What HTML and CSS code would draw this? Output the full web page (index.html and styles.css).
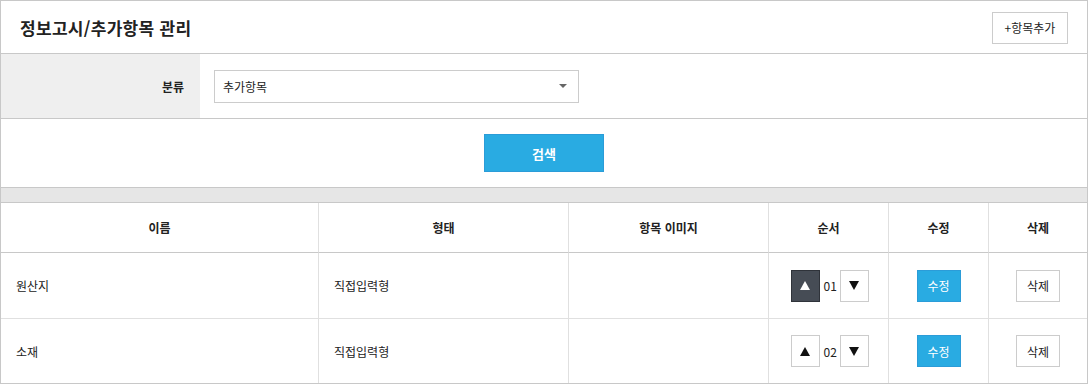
FILE: index.html
```html
<!DOCTYPE html>
<html lang="ko">
<head>
    <meta charset="UTF-8">
    <title>정보고시/추가항목 관리</title>
    <link rel="stylesheet" href="styles.css">
</head>
<body>
    <div class="panel">
        <div class="panel-head">
            <h1>정보고시/추가항목 관리</h1>
            <button class="btn btn-line btn-add">+항목추가</button>
        </div>

        <div class="filter-row">
            <div class="filter-label">분류</div>
            <div class="filter-field">
                <div class="select">
                    <span>추가항목</span>
                    <span class="select-arrow"></span>
                </div>
            </div>
        </div>

        <div class="search-row">
            <button class="btn btn-blue btn-search">검색</button>
        </div>

        <div class="spacer-bar"></div>

        <div class="grid">
            <div class="cell head">이름</div>
            <div class="cell head">형태</div>
            <div class="cell head">항목 이미지</div>
            <div class="cell head">순서</div>
            <div class="cell head">수정</div>
            <div class="cell head last">삭제</div>

            <div class="cell">원산지</div>
            <div class="cell">직접입력형</div>
            <div class="cell"></div>
            <div class="cell center">
                <div class="order">
                    <button class="btn arrow active"><span class="tri up"></span></button>
                    <span class="order-num">01</span>
                    <button class="btn arrow"><span class="tri down"></span></button>
                </div>
            </div>
            <div class="cell center"><button class="btn btn-blue btn-small">수정</button></div>
            <div class="cell center last"><button class="btn btn-line btn-small">삭제</button></div>

            <div class="cell bottom">소재</div>
            <div class="cell bottom">직접입력형</div>
            <div class="cell bottom"></div>
            <div class="cell center bottom">
                <div class="order">
                    <button class="btn arrow"><span class="tri up"></span></button>
                    <span class="order-num">02</span>
                    <button class="btn arrow"><span class="tri down"></span></button>
                </div>
            </div>
            <div class="cell center bottom"><button class="btn btn-blue btn-small">수정</button></div>
            <div class="cell center bottom last"><button class="btn btn-line btn-small">삭제</button></div>
        </div>
    </div>
</body>
</html>
```

FILE: styles.css
```css
* {
    margin: 0;
    padding: 0;
    box-sizing: border-box;
}

body {
    font-family: "Noto Sans CJK KR", "Noto Sans", sans-serif;
    font-size: 12px;
    color: #222;
    background: #fff;
}

.panel {
    width: 1088px;
    height: 384px;
    border: 1px solid #c8c8c8;
}

.panel-head {
    height: 53px;
    border-bottom: 1px solid #c8c8c8;
    display: flex;
    align-items: center;
    justify-content: space-between;
    padding: 0 19px 0 19px;
}

h1 {
    font-size: 17px;
    font-weight: 700;
    color: #222;
    letter-spacing: 0.3px;
}

.btn {
    font-family: inherit;
    font-size: 12px;
    cursor: pointer;
    display: flex;
    align-items: center;
    justify-content: center;
    background: #fff;
    color: #222;
}

.btn-line {
    border: 1px solid #ccc;
}

.btn-blue {
    background: #29abe2;
    border: 1px solid #2b9cd8;
    color: #fff;
}

.btn-add {
    width: 76px;
    height: 32px;
    margin-top: 1px;
}

.filter-row {
    display: flex;
    height: 65px;
    border-bottom: 1px solid #c8c8c8;
}

.filter-label {
    width: 199px;
    background: #efefef;
    display: flex;
    align-items: center;
    justify-content: flex-end;
    padding-right: 16px;
    font-weight: 700;
}

.filter-field {
    display: flex;
    align-items: center;
    padding-left: 14px;
}

.select {
    width: 365px;
    height: 33px;
    border: 1px solid #ccc;
    display: flex;
    align-items: center;
    justify-content: space-between;
    padding: 0 11px 0 8px;
}

.select-arrow {
    width: 0;
    height: 0;
    border-left: 4px solid transparent;
    border-right: 4px solid transparent;
    border-top: 4px solid #666;
}

.search-row {
    height: 68px;
    display: flex;
    align-items: center;
    justify-content: center;
}

.btn-search {
    width: 120px;
    height: 38px;
    font-weight: 700;
    font-size: 13px;
}

.spacer-bar {
    height: 16px;
    background: #e6e6e6;
    border-top: 1px solid #c8c8c8;
    border-bottom: 1px solid #c8c8c8;
}

.grid {
    display: grid;
    grid-template-columns: 318px 250px 200px 120px 100px 1fr;
    grid-template-rows: 50px 66px 64px;
}

.cell {
    border-right: 1px solid #e0e0e0;
    border-bottom: 1px solid #e0e0e0;
    display: flex;
    align-items: center;
    padding-left: 15px;
}

.cell.head {
    justify-content: center;
    padding-left: 0;
    font-weight: 700;
    border-bottom-color: #c8c8c8;
}

.cell.center {
    justify-content: center;
    padding-left: 0;
}

.cell.last {
    border-right: none;
}

.cell.bottom {
    border-bottom: none;
}

.order {
    display: flex;
    align-items: center;
    gap: 4px;
    margin-left: 2px;
}

.order-num {
    width: 12px;
    text-align: center;
}

.arrow {
    width: 29px;
    height: 32px;
    border: 1px solid #ccc;
}

.arrow.active {
    background: #464c55;
    border-color: #2f333a;
}

.tri {
    width: 0;
    height: 0;
    border-left: 5px solid transparent;
    border-right: 5px solid transparent;
}

.tri.up {
    border-bottom: 9px solid #111;
}

.tri.down {
    border-top: 9px solid #111;
}

.arrow.active .tri.up {
    border-bottom-color: #fff;
}

.btn-small {
    width: 44px;
    height: 32px;
}
```
